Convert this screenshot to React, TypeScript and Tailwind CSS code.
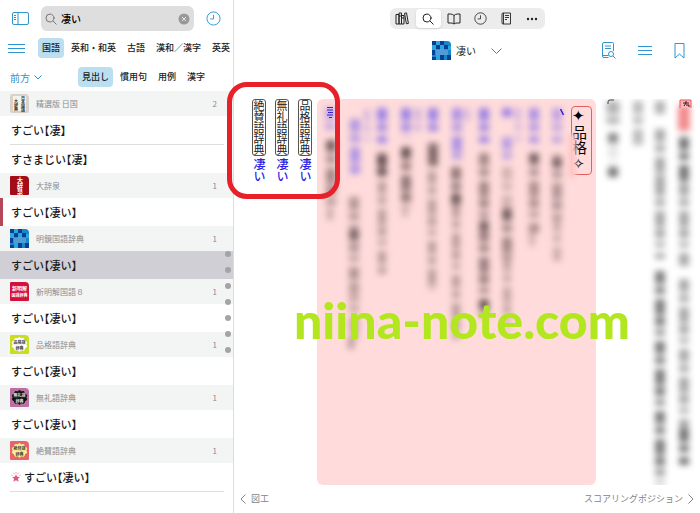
import { useState } from 'react';

interface Entry {
  text: string;
  active?: boolean;
  marked?: boolean;
  starred?: boolean;
  line?: boolean;
}

interface Dictionary {
  id: string;
  name: string;
  count: number;
  entries: Entry[];
}

interface Column {
  x: number;
  from: number;
  to: number;
  tone: 'ink' | 'blue' | 'gray';
  opacity: number;
  width?: number;
}

const dictionaries: Dictionary[] = [
  { id: 'nikkoku', name: '精選版 日国', count: 2, entries: [{ text: 'すごい【凄】', line: true }, { text: 'すさまじい【凄】' }] },
  { id: 'daijisen', name: '大辞泉', count: 1, entries: [{ text: 'すごい【凄い】', marked: true }] },
  { id: 'meikyo', name: '明鏡国語辞典', count: 1, entries: [{ text: 'すごい【凄い】', active: true }] },
  { id: 'shinmeikai', name: '新明解国語８', count: 1, entries: [{ text: 'すごい【凄い】' }] },
  { id: 'hinkaku', name: '品格語辞典', count: 1, entries: [{ text: 'すごい【凄い】' }] },
  { id: 'burei', name: '無礼語辞典', count: 1, entries: [{ text: 'すごい【凄い】' }] },
  { id: 'zessan', name: '絶賛語辞典', count: 1, entries: [{ text: 'すごい【凄い】', starred: true, line: true }] },
];

const categories = ['国語', '英和・和英', '古語', '漢和／漢字', '英英'];
const scopes = ['見出し', '慣用句', '用例', '漢字'];
const links = ['絶賛語辞典', '無礼語辞典', '品格語辞典'];

const noteColumns: Column[] = [
  { x: 13, from: 8, to: 32, tone: 'blue', opacity: 0.3 },
  { x: 14, from: 41, to: 108, tone: 'ink', opacity: 0.5 },
  { x: 13, from: 108, to: 124, tone: 'ink', opacity: 0.3, width: 6 },
  { x: 38, from: 20, to: 78, tone: 'blue', opacity: 0.4 },
  { x: 50, from: 10, to: 42, tone: 'blue', opacity: 0.22, width: 6 },
  { x: 37, from: 98, to: 190, tone: 'ink', opacity: 0.42 },
  { x: 37, from: 190, to: 240, tone: 'ink', opacity: 0.3 },
  { x: 34, from: 240, to: 250, tone: 'ink', opacity: 0.4, width: 6 },
  { x: 65, from: 9, to: 44, tone: 'blue', opacity: 0.5 },
  { x: 65, from: 54, to: 82, tone: 'ink', opacity: 0.65 },
  { x: 65, from: 82, to: 176, tone: 'ink', opacity: 0.38, width: 8 },
  { x: 89, from: 9, to: 38, tone: 'blue', opacity: 0.5 },
  { x: 101, from: 9, to: 32, tone: 'blue', opacity: 0.25, width: 6 },
  { x: 89, from: 48, to: 108, tone: 'ink', opacity: 0.6 },
  { x: 88, from: 108, to: 118, tone: 'ink', opacity: 0.25, width: 6 },
  { x: 116, from: 9, to: 34, tone: 'blue', opacity: 0.5 },
  { x: 116, from: 44, to: 72, tone: 'ink', opacity: 0.65 },
  { x: 115, from: 72, to: 190, tone: 'ink', opacity: 0.38, width: 8 },
  { x: 140, from: 9, to: 60, tone: 'blue', opacity: 0.42 },
  { x: 150, from: 9, to: 22, tone: 'blue', opacity: 0.2, width: 6 },
  { x: 139, from: 68, to: 106, tone: 'ink', opacity: 0.6 },
  { x: 139, from: 106, to: 244, tone: 'ink', opacity: 0.38, width: 8 },
  { x: 167, from: 9, to: 44, tone: 'blue', opacity: 0.5 },
  { x: 167, from: 54, to: 130, tone: 'ink', opacity: 0.5 },
  { x: 167, from: 130, to: 218, tone: 'ink', opacity: 0.55 },
  { x: 190, from: 9, to: 18, tone: 'blue', opacity: 0.5 },
  { x: 190, from: 38, to: 60, tone: 'blue', opacity: 0.35 },
  { x: 201, from: 9, to: 42, tone: 'blue', opacity: 0.22, width: 6 },
  { x: 190, from: 68, to: 110, tone: 'ink', opacity: 0.25 },
  { x: 190, from: 110, to: 160, tone: 'ink', opacity: 0.5 },
  { x: 190, from: 160, to: 232, tone: 'ink', opacity: 0.32, width: 8 },
  { x: 217, from: 9, to: 44, tone: 'blue', opacity: 0.42 },
  { x: 217, from: 54, to: 134, tone: 'ink', opacity: 0.45 },
  { x: 215, from: 134, to: 148, tone: 'ink', opacity: 0.25, width: 6 },
  { x: 240, from: 9, to: 44, tone: 'blue', opacity: 0.32 },
  { x: 240, from: 56, to: 120, tone: 'ink', opacity: 0.42 },
  { x: 240, from: 120, to: 162, tone: 'ink', opacity: 0.28, width: 8 },
];

const noteSpots = [
  [14, 46], [37, 136], [65, 62], [65, 72], [89, 53], [116, 58], [139, 98],
  [167, 125], [167, 205], [190, 115], [217, 59], [240, 64],
];

const sideColumns: Column[] = [
  { x: 17, from: 2, to: 28, tone: 'gray', opacity: 0.45, width: 13 },
  { x: 17, from: 34, to: 44, tone: 'gray', opacity: 0.7 },
  { x: 17, from: 46, to: 64, tone: 'gray', opacity: 0.15 },
  { x: 17, from: 68, to: 78, tone: 'gray', opacity: 0.8 },
  { x: 42, from: 2, to: 46, tone: 'gray', opacity: 0.4 },
  { x: 64, from: 2, to: 16, tone: 'gray', opacity: 0.45 },
  { x: 64, from: 30, to: 84, tone: 'gray', opacity: 0.5 },
  { x: 64, from: 84, to: 160, tone: 'gray', opacity: 0.5 },
  { x: 64, from: 172, to: 384, tone: 'gray', opacity: 0.75 },
  { x: 88, from: 38, to: 84, tone: 'gray', opacity: 0.8 },
  { x: 88, from: 84, to: 170, tone: 'gray', opacity: 0.5 },
  { x: 88, from: 180, to: 330, tone: 'gray', opacity: 0.5 },
  { x: 88, from: 330, to: 366, tone: 'gray', opacity: 0.8 },
];

const tones = { ink: '#4b3336', blue: '#3c2cf0', gray: '#555' };

function Smear({ column }: { column: Column }) {
  return (
    <line
      x1={column.x}
      x2={column.x}
      y1={column.from}
      y2={column.to}
      stroke={tones[column.tone]}
      strokeOpacity={column.opacity}
      strokeWidth={column.width ?? 10}
      strokeDasharray="13 3 7 5 16 2 9 4 5 6"
    />
  );
}

function Checker() {
  return (
    <g>
      <path d="M0 0h15q4 0 4 4v15H0z" fill="#1786cc" />
      <path d="M0 0h4v4H0zM8 0h4v4H8zM4 4h4v5H4zM12 4h4v5h-4zM0 9h4v5H0zM8 14h4v5H8zM0 16h4v3H0zM15 14h4v5h-4z" fill="#073f98" />
      <path d="M4 0h4v4H4zM0 4h4v5H0zM8 4h4v5H8zM16 5h3v4h-3zM4 14h4v5H4z" fill="#2aa9d8" />
      <path d="M3 8h13v6H3z" fill="#6fa7da" fillOpacity=".65" />
    </g>
  );
}

function DictionaryIcon({ id }: { id: string }) {
  const seal = 'M9.5 2.5l2 1.3 2.4-.2.8 2.2 2 1.3-.7 2.3.7 2.3-2 1.3-.8 2.2-2.4-.2-2 1.3-2-1.3-2.4.2-.8-2.2-2-1.3.7-2.3-.7-2.3 2-1.3.8-2.2 2.4.2z';
  const tile = 'M0 1q0-1 1-1h14q4 0 4 4v14q0 1-1 1H1q-1 0-1-1z';
  return (
    <svg viewBox="0 0 19 19" className="size-[19px] shrink-0 font-bold" aria-hidden="true">
      {id === 'nikkoku' && (
        <>
          <path d="M0 2q0-2 2-2h13q4 0 4 4v13q0 2-2 2H2q-2 0-2-2z" fill="#d8d2c8" />
          <path d="M3 2h13v15H3z" fill="#f5f2ec" />
          <g fontSize="4" fill="#333">
            <text x="13" y="2" className="[writing-mode:vertical-rl]">日本国語</text>
            <text x="6" y="5" className="[writing-mode:vertical-rl]">大辞典</text>
          </g>
        </>
      )}
      {id === 'daijisen' && (
        <>
          <path d={tile} fill="#a20d18" />
          <text x="10" y="1" fontSize="6" fill="#fff" className="[writing-mode:vertical-rl]">大辞泉</text>
        </>
      )}
      {id === 'meikyo' && <Checker />}
      {id === 'shinmeikai' && (
        <>
          <path d={tile} fill="#d3113d" />
          <text x="2" y="8" fontSize="5" fill="#fff">新明解</text>
          <text x="1.5" y="15" fontSize="4" fill="#fff">国語辞典</text>
        </>
      )}
      {id === 'hinkaku' && (
        <>
          <path d={tile} fill="#c9de22" />
          <path d={seal} fill="#fff" stroke="#fff" />
          <g fill="#444" fontSize="4">
            <text x="3.5" y="8.5">品格語</text><text x="5.5" y="14.5">辞典</text>
          </g>
        </>
      )}
      {id === 'burei' && (
        <>
          <path d={tile} fill="#bd6fa3" />
          <path d={seal} fill="#111" stroke="#111" />
          <g fill="#ddd" fontSize="4">
            <text x="3.5" y="8.5">無礼語</text><text x="5.5" y="14.5">辞典</text>
          </g>
        </>
      )}
      {id === 'zessan' && (
        <>
          <path d={tile} fill="#e8646c" />
          <path d={seal} fill="#fdf08a" stroke="#fdf08a" />
          <g fill="#444" fontSize="4">
            <text x="3.5" y="8.5">絶賛語</text><text x="5.5" y="14.5">辞典</text>
          </g>
        </>
      )}
    </svg>
  );
}

function Clock({ className }: { className: string }) {
  return (
    <svg viewBox="0 0 16 16" fill="none" stroke="currentColor" className={className} aria-hidden="true">
      <circle cx="8" cy="8" r="7" />
      <path d="M8 4v4.500H4.500" />
    </svg>
  );
}

function Magnifier({ className }: { className: string }) {
  return (
    <svg viewBox="0 0 12 12" fill="none" stroke="currentColor" strokeLinecap="round" className={className} aria-hidden="true">
      <circle cx="5" cy="5" r="4" />
      <path d="M8 8l3.200 3.200" />
    </svg>
  );
}

const tools = [
  {
    label: '書棚',
    icon: (
      <svg viewBox="0 0 14 13" fill="none" stroke="currentColor" className="h-[13px] w-3.5">
        <path d="M1 2.500h3v9.500H1zM4 1h2.500v11H4zM6.500 3.500H9V12H6.500zM9.500 1.300l2-.4 1.900 10.500-2 .4zM4 4h2.500M6.500 6H9" />
      </svg>
    ),
  },
  { label: '検索', icon: <Magnifier className="size-3" /> },
  {
    label: '本文',
    icon: (
      <svg viewBox="0 0 14 12" fill="none" stroke="currentColor" className="h-3 w-3.5">
        <path d="M7 2.500Q5.500 1 3.500 1H1v9h2.800Q6 10 7 11q1-1 3.200-1H13V1h-2.500Q8.500 1 7 2.500zM7 2.500V11" />
      </svg>
    ),
  },
  { label: '履歴', icon: <Clock className="size-[13px]" /> },
  {
    label: 'メモ',
    icon: (
      <svg viewBox="0 0 11 13" fill="none" stroke="currentColor" className="h-[13px] w-[11px]">
        <path d="M2 1h7.500v11H2q-1 0-1-1V2q0-1 1-1zM4 3.500h4M4 5.500h4M4 7.500h2M2.500 1v11" strokeWidth=".9" />
      </svg>
    ),
  },
  {
    label: 'その他',
    icon: (
      <svg viewBox="0 0 12 4" fill="currentColor" className="h-1 w-3">
        <circle cx="2" cy="2" r="1.200" /><circle cx="6" cy="2" r="1.200" /><circle cx="10" cy="2" r="1.200" />
      </svg>
    ),
  },
];

function Sidebar() {
  const [query, setQuery] = useState('凄い');
  const [category, setCategory] = useState('国語');
  const [scope, setScope] = useState('見出し');

  return (
    <aside className="w-[234px] shrink-0 border-r border-[#dcdcde] bg-white">
      <div className="flex items-center gap-3 px-3 pt-1.5">
        <button aria-label="サイドバー" className="text-[#3094cd]">
          <svg viewBox="0 0 17 13" fill="none" stroke="currentColor" className="h-[13px] w-[17px]">
            <rect x=".5" y=".5" width="16" height="12" rx="1.500" />
            <path d="M6 .5v12M2 3.500h2M2 5.500h2M2 7.500h2" />
          </svg>
        </button>
        <div className="flex h-[25px] flex-1 items-center rounded-md bg-[#dededf] px-1">
          <Magnifier className="mr-1 size-3 shrink-0 text-[#77777b]" />
          <input
            aria-label="検索"
            value={query}
            onChange={(e) => setQuery(e.target.value)}
            className="w-0 flex-1 bg-transparent text-[10px] font-medium text-black focus:outline-none"
          />
          <button aria-label="消去" onClick={() => setQuery('')} className="text-[#98989b]">
            <svg viewBox="0 0 12 12" className="size-3">
              <circle cx="6" cy="6" r="5.500" fill="currentColor" />
              <path d="M4 4l4 4M8 4L4 8" stroke="#e8e8e8" />
            </svg>
          </button>
        </div>
        <button aria-label="履歴" className="text-[#3094cd]">
          <Clock className="size-[15px]" />
        </button>
      </div>

      <div className="mt-[7px] flex h-5 items-center pl-2">
        <button aria-label="メニュー" className="mr-[13px] text-[#3094cd]">
          <svg viewBox="0 0 17 11" stroke="currentColor" className="h-[11px] w-[17px]">
            <path d="M0 1.500h17M0 5.500h17M0 9.500h17" />
          </svg>
        </button>
        <nav className="flex flex-1 gap-[3px] overflow-hidden">
          {categories.map((name) => (
            <button
              key={name}
              onClick={() => setCategory(name)}
              className={`h-5 shrink-0 rounded px-1 text-[9px] font-medium whitespace-nowrap text-[#222] ${name === category ? 'bg-[#bbdff0]' : ''}`}
            >
              {name}
            </button>
          ))}
        </nav>
      </div>

      <div className="mt-[9px] mb-1 flex h-5 items-center pl-2.5">
        <button className="flex w-[68px] items-center gap-1 text-[10px] text-[#3094cd]">
          前方
          <svg viewBox="0 0 8 5" fill="none" stroke="currentColor" className="h-[5px] w-2">
            <path d="M.5 .5L4 4 7.500 .5" />
          </svg>
        </button>
        <nav className="flex gap-[3px]">
          {scopes.map((name) => (
            <button
              key={name}
              onClick={() => setScope(name)}
              className={`h-5 rounded px-1 text-[9px] font-medium whitespace-nowrap text-[#222] ${name === scope ? 'bg-[#bbdff0]' : ''}`}
            >
              {name}
            </button>
          ))}
        </nav>
      </div>

      <div className="relative">
        {dictionaries.map((dictionary) => (
          <section key={dictionary.id}>
            <h2 className="flex h-[25px] items-center bg-[#f3f5f5] pr-4 pl-2.5 text-[8px] text-[#8b8b8e]">
              <DictionaryIcon id={dictionary.id} />
              <span className="ml-[7px] flex-1">{dictionary.name}</span>
              <span>{dictionary.count}</span>
            </h2>
            <ul>
              {dictionary.entries.map((entry) => (
                <li key={entry.text} className={entry.active ? 'bg-[#d0cfd5]' : ''}>
                  <a
                    href="#entry"
                    className={`flex h-7 items-center text-[11px] font-medium text-[#1a1a1a] [font-feature-settings:'halt'] ${entry.marked ? 'border-l-[3px] border-[#b5475a] pl-2' : 'pl-[11px]'}`}
                  >
                    {entry.starred && (
                      <svg viewBox="0 0 10 10" className="mr-[3px] size-2.5" aria-hidden="true">
                        <path d="M5 2.500l1.200 2.300 2.700.2-2 1.800.7 2.900L5 8.300 2.400 9.700l.7-2.900-2-1.800 2.700-.2z" fill="#e0557c" />
                        <path d="M5 0v1.800M2.300 .8l.9 1.500M7.700 .8l-.9 1.500M.3 3l1.400.7M9.700 3l-1.400.7" stroke="#e98ba4" strokeWidth=".8" />
                      </svg>
                    )}
                    {entry.text}
                  </a>
                  {entry.line && <div className="mr-[9px] ml-2.5 h-px bg-[#dededf]" />}
                </li>
              ))}
            </ul>
          </section>
        ))}
        {/* Page dots floating over the list */}
        <div className="absolute top-40 right-[2px] flex flex-col gap-2.5">
          {dictionaries.map((dictionary) => (
            <span key={dictionary.id} className="size-1.5 rounded-full bg-[#a4a4a8]" />
          ))}
        </div>
      </div>
    </aside>
  );
}

function Note() {
  return (
    <article className="flex flex-1 rounded-md bg-[#ffdcdb]">
      <svg viewBox="0 0 254 386" preserveAspectRatio="xMinYMin meet" className="h-[386px] w-0 flex-1 overflow-visible" aria-hidden="true">
        <g className="blur-[3px]">
          {noteColumns.map((column) => (
            <Smear key={`${column.x}-${column.from}`} column={column} />
          ))}
          {noteSpots.map(([x, y]) => (
            <circle key={`${x}-${y}`} cx={x} cy={y} r="5" fill="#2f2225" fillOpacity=".45" />
          ))}
        </g>
        <path d="M10 8.500h6M10 11h6M11 13.500h5M10 16h6M12 18.500h3" stroke="#3320d8" />
        <path d="M243.500 10l3 6" stroke="#3320d8" strokeWidth="1.500" />
      </svg>
      <div className="relative mt-[7px] mr-1 h-[69px] w-[21px] rounded-sm border border-[#e0605f] py-0.5 text-[15px] leading-[19px] text-black [writing-mode:vertical-rl]">
        ✦品格✧
        <span className="absolute -bottom-1 -left-1 h-11 w-2 bg-[#ffc8c8] blur-[2px]" />
      </div>
    </article>
  );
}

function Reader() {
  const [tool, setTool] = useState('検索');

  return (
    <main className="relative flex min-w-0 flex-1 flex-col bg-white">
      <div className="mx-auto mt-2 flex h-[21px] gap-px rounded-md bg-[#ececed]">
        {tools.map(({ label, icon }) => (
          <button
            key={label}
            aria-label={label}
            onClick={() => setTool(label)}
            className={`my-px flex w-[25px] items-center justify-center rounded text-[#222] ${label === tool ? 'bg-white shadow-sm' : ''}`}
          >
            {icon}
          </button>
        ))}
      </div>

      <header className="mt-3 grid h-[19px] grid-cols-[1fr_auto_1fr] items-center pr-[15px]">
        <button className="col-start-2 ml-[15px] flex items-center text-[10px] text-[#222]">
          <DictionaryIcon id="meikyo" />
          <span className="mr-[15px] ml-[5px]">凄い</span>
          <svg viewBox="0 0 11 6" fill="none" stroke="#777" className="h-1.5 w-[11px]">
            <path d="M.5 .5l5 5 5-5" />
          </svg>
        </button>
        <div className="flex items-center justify-end gap-[22px] text-[#3094cd]">
          <button aria-label="本文内検索">
            <svg viewBox="0 0 14 17" fill="none" stroke="currentColor" className="h-[17px] w-3.5">
              <path d="M6.500 15.500H2q-1.500 0-1.500-1.500V2Q.5 .5 2 .5h8.500q1 0 1 1V9M.5 13.500h6M3 4h6M3 6.500h6" />
              <circle cx="9" cy="12" r="2.500" />
              <path d="M11 14l2.500 2.500" />
            </svg>
          </button>
          <button aria-label="目次">
            <svg viewBox="0 0 14 9" stroke="currentColor" className="h-[9px] w-3.5">
              <path d="M0 .5h14M0 4.500h14M0 8.500h14" />
            </svg>
          </button>
          <button aria-label="しおり">
            <svg viewBox="0 0 11 16" fill="none" stroke="currentColor" className="h-4 w-[11px]">
              <path d="M1 .5h9V15l-4.500-4L1 15z" strokeLinejoin="round" />
            </svg>
          </button>
        </div>
      </header>

      <div className="mt-[39px] flex flex-1 pl-[18px]">
        <nav className="mr-[5px] flex gap-[9px]">
          {links.map((name) => (
            <a key={name} href="#link" className="flex w-3.5 flex-col items-center gap-0.5">
              <span className="w-3.5 rounded-[3px] border border-[#555] text-[11px] leading-3 text-[#222] [writing-mode:vertical-rl]">{name}</span>
              <span className="text-[12px] leading-[14px] font-medium text-[#2a1fe0] [writing-mode:vertical-rl]">凄い</span>
            </a>
          ))}
        </nav>
        <Note />
        <svg viewBox="0 0 104 386" className="h-[386px] w-[104px] shrink-0" aria-hidden="true">
          <g className="blur-[3px]">
            {sideColumns.map((column) => (
              <Smear key={`${column.x}-${column.from}`} column={column} />
            ))}
            <rect x="82" y="6" width="12" height="26" fill="#f28a8c" />
          </g>
          <path d="M12 5V3q0-2 2-2h4" fill="none" stroke="#444" />
          <path d="M84 9V1h11v8" fill="#f9b7b8" stroke="#e25b5d" />
          <path d="M87 4h6M90 2v2M88 7l2-3M90 6h3v2" fill="none" stroke="#412" />
        </svg>
      </div>

      <footer className="flex h-7 items-center justify-between px-1.5 pb-px text-[9px] text-[#858587]">
        <a href="#prev" className="flex items-center gap-[5px]">
          <svg viewBox="0 0 6 10" fill="none" stroke="currentColor" className="h-2.5 w-1.5">
            <path d="M5.500 .5L1 5l4.500 4.500" />
          </svg>
          図工
        </a>
        <a href="#next" className="flex items-center gap-[5px]">
          スコアリングポジション
          <svg viewBox="0 0 6 10" fill="none" stroke="currentColor" className="h-2.5 w-1.5">
            <path d="M.5 .5L5 5 .5 9.500" />
          </svg>
        </a>
      </footer>

      {/* Callout and watermark */}
      <div className="pointer-events-none absolute top-[82px] -left-[7px] h-[117px] w-[113px] rounded-[20px] border-5 border-[#e8202a]" />
      <p className="pointer-events-none absolute top-[288px] left-[60px] font-['Lato',sans-serif] text-[50px] leading-[64px] font-black whitespace-nowrap text-[#b2e61e]">
        niina-note.com
      </p>
    </main>
  );
}

export default function App() {
  return (
    <div lang="ja" className="flex min-h-screen bg-white font-['Noto_Sans_CJK_JP',sans-serif]">
      <Sidebar />
      <Reader />
    </div>
  );
}
